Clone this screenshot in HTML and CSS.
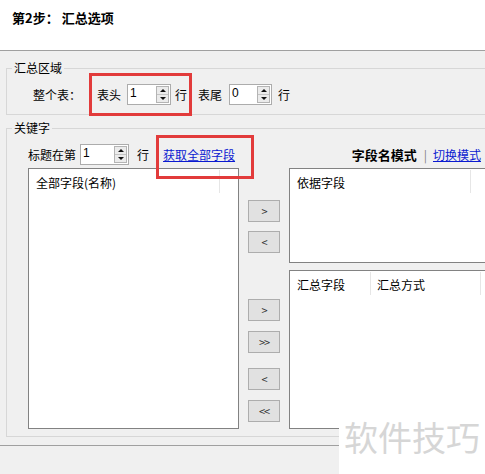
FILE: index.html
```html
<!DOCTYPE html>
<html lang="zh-CN">
<head>
<meta charset="utf-8">
<title>第2步：汇总选项</title>
<link rel="stylesheet" href="styles.css">
</head>
<body>
<div class="page">
  <header class="top">
    <h1 class="title">第2步：<span class="title-rest">汇总选项</span></h1>
  </header>
  <main class="content">
    <fieldset class="group g1">
      <legend>汇总区域</legend>
      <div class="row r1">
        <span class="lbl">整个表：</span>
        <span class="lbl head-lbl">表头</span>
        <div class="spin s1"><span class="val">1</span><span class="arrows"><i class="up"></i><i class="dn"></i></span></div>
        <span class="lbl unit">行</span>
        <span class="lbl tail-lbl">表尾</span>
        <div class="spin s2"><span class="val">0</span><span class="arrows"><i class="up"></i><i class="dn"></i></span></div>
        <span class="lbl unit2">行</span>
      </div>
    </fieldset>
    <fieldset class="group g2">
      <legend>关键字</legend>
      <div class="kw">
        <div class="row r2">
          <span class="lbl">标题在第</span>
          <div class="spin s3"><span class="val">1</span><span class="arrows"><i class="up"></i><i class="dn"></i></span></div>
          <span class="lbl unit3">行</span>
          <a class="link fetch" href="#">获取全部字段</a>
          <div class="mode">
            <span class="mode-name">字段名模式</span>
            <span class="mode-bar">|</span>
            <a class="link" href="#">切换模式</a>
          </div>
        </div>
        <div class="lists">
          <div class="list list-all">
            <div class="list-head"><span class="col c-all">全部字段(名称)</span></div>
          </div>
          <div class="btns">
            <div class="btn b1">&gt;</div>
            <div class="btn b2">&lt;</div>
            <div class="btn b3">&gt;</div>
            <div class="btn b4">&gt;&gt;</div>
            <div class="btn b5">&lt;</div>
            <div class="btn b6">&lt;&lt;</div>
          </div>
          <div class="right">
            <div class="list list-by">
              <div class="list-head"><span class="col c-by">依据字段</span></div>
            </div>
            <div class="list list-sum">
              <div class="list-head"><span class="col c-sum1">汇总字段</span><span class="col c-sum2">汇总方式</span></div>
            </div>
          </div>
        </div>
      </div>
    </fieldset>
    <div class="sep"></div>
  </main>
  <div class="mark mark1"></div>
  <div class="mark mark2"></div>
  <div class="watermark">软件技巧</div>
</div>
</body>
</html>
```
FILE: styles.css
```css
* { box-sizing: border-box; }
html, body { margin: 0; padding: 0; }
body {
  width: 485px;
  height: 474px;
  overflow: hidden;
  background: #f0f0f0;
  font-family: "Noto Sans CJK SC", "Liberation Sans", sans-serif;
  font-size: 12px;
  color: #000;
}
.page { position: relative; width: 485px; height: 474px; overflow: hidden; }

.top {
  height: 51px;
  background: #fff;
  border-bottom: 1px solid #a0a0a0;
  padding: 10px 0 0 12px;
}
.title { margin: 0; font-size: 13px; font-weight: bold; line-height: 16px; }
.title-rest { margin-left: 3px; }

.group {
  margin: 9px -40px 0 6px;
  padding: 0;
  border: 1px solid #d7d7d7;
  min-width: 0;
}
.group legend {
  margin-left: 5px;
  padding: 0 2px;
  line-height: 16px;
  font-size: 12px;
}
.g2 { margin-top: 5px; }

.row { display: flex; align-items: center; height: 21px; line-height: 16px; }
.g1 .row { margin: 8px 0 9px 26px; box-sizing: content-box; }
.head-lbl { margin-left: 16px; }
.s1 { margin-left: 6px; width: 44px; }
.unit { margin-left: 4px; }
.tail-lbl { margin-left: 11px; }
.s2 { margin-left: 7px; width: 43px; }
.unit2 { margin-left: 6px; }

.kw { padding: 8px 0 7px 21px; width: 482px; }
.r2 { width: 461px; }
.s3 { margin-left: 4px; width: 49px; }
.unit3 { margin-left: 8px; }
.fetch { margin-left: 14px; }
.mode { margin-left: auto; padding-right: 8px; display: flex; align-items: center; }
.mode-name { font-weight: bold; font-size: 13px; }
.mode-bar { color: #808080; margin: 0 6px 0 7px; }

.link { color: #0a1ad0; text-decoration: underline; }

.spin {
  display: flex;
  height: 21px;
  border: 1px solid #acacac;
  background: #fff;
}
.spin .val {
  flex: 1;
  padding: 1px 0 0 2px;
  line-height: 14px;
  font-family: "Liberation Sans", sans-serif;
  font-size: 12px;
}
.arrows {
  width: 13px;
  margin: 1px;
  border: 1px solid #b4b4b4;
  background: #ebebeb;
  display: flex;
  flex-direction: column;
}
.arrows i { flex: 1; display: flex; align-items: center; justify-content: center; }
.arrows .up { border-bottom: 1px solid #c4c4c4; }
.arrows .up::before {
  content: "";
  border-left: 3px solid transparent;
  border-right: 3px solid transparent;
  border-bottom: 3px solid #111;
}
.arrows .dn::before {
  content: "";
  border-left: 3px solid transparent;
  border-right: 3px solid transparent;
  border-top: 3px solid #111;
}

.lists { display: flex; margin-top: 3px; }
.list { background: #fff; border: 1px solid #828282; }
.list-all { width: 211px; height: 261px; }
.list-head { display: flex; margin-top: 1px; }
.col {
  height: 23px;
  padding: 5px 0 0 7px;
  line-height: 16px;
  border-right: 1px solid #e6e6e6;
  white-space: nowrap;
}
.c-all { width: 191px; }
.c-by { width: 181px; }
.c-sum1 { width: 81px; }
.c-sum2 { width: 110px; padding-left: 6px; }

.btns { width: 32px; margin-left: 9px; display: flex; flex-direction: column; padding-top: 32px; }
.btn {
  height: 22px;
  background: #e1e1e1;
  border: 1px solid #adadad;
  display: flex;
  align-items: center;
  justify-content: center;
  font-family: "Noto Sans CJK SC", sans-serif;
  font-size: 11px;
  color: #333;
  letter-spacing: -1px;
}
.b2 { margin-top: 9px; }
.b3 { margin-top: 46px; }
.b4 { margin-top: 10px; }
.b5 { margin-top: 15px; }
.b6 { margin-top: 10px; }

.right { width: 200px; margin-left: 9px; display: flex; flex-direction: column; gap: 7px; }
.list-by { height: 95px; }
.list-sum { height: 159px; }

.sep { margin-top: 8px; border-top: 1px solid #a0a0a0; }

.mark {
  position: absolute;
  border: 3px solid #e23b3b;
}
.mark1 { left: 89px; top: 73px; width: 103px; height: 43px; }
.mark2 { left: 156px; top: 135px; width: 98px; height: 44px; }

.watermark {
  position: absolute;
  left: 339px;
  top: 405px;
  width: 146px;
  height: 69px;
  background: #fff;
  padding: 15px 0 0 5px;
  font-size: 34px;
  line-height: 34px;
  color: #d6d6d6;
  white-space: nowrap;
}
```
